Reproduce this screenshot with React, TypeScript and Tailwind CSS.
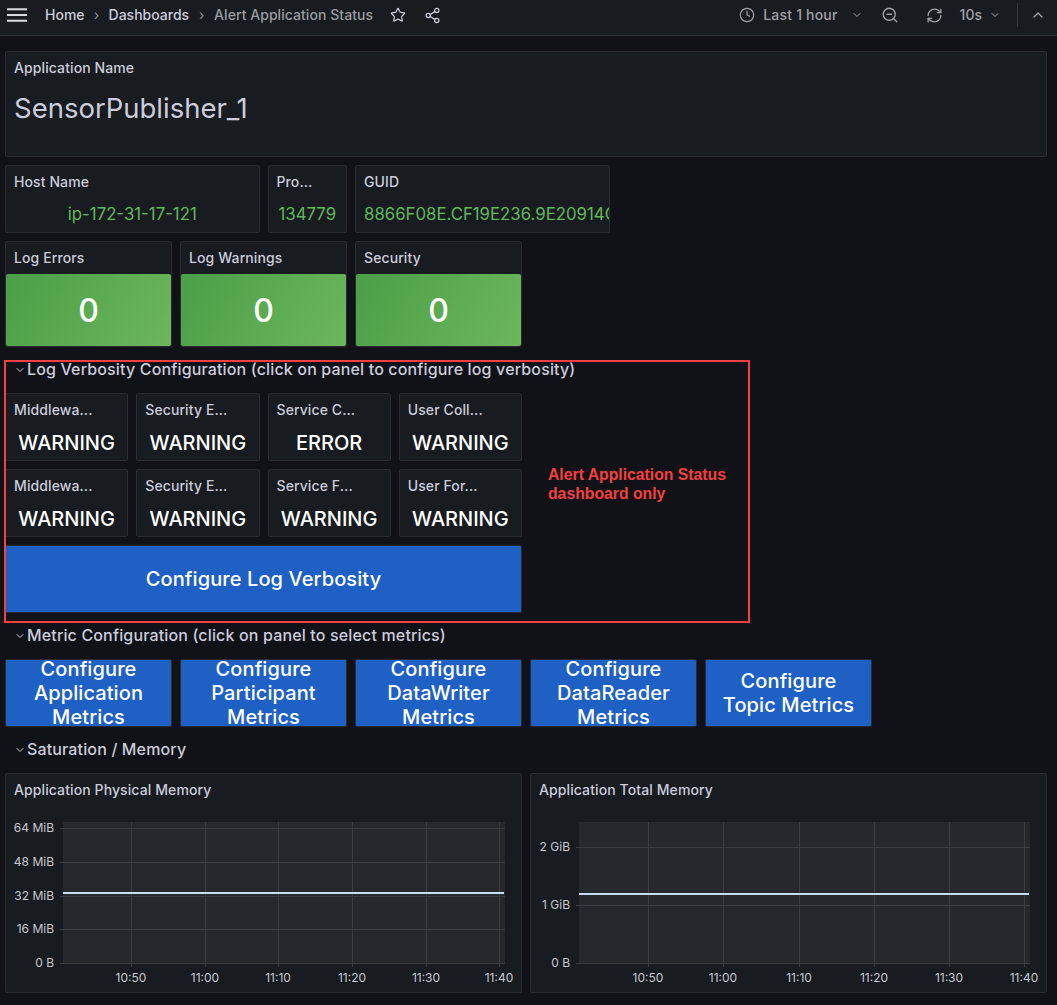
import React from "react";
import { ChevronDown, ChevronUp, Clock, RefreshCw, Share2, Star, ZoomOut } from "lucide-react";

const Panel: React.FC<{ className?: string; title?: string; children?: React.ReactNode }> = ({
  className = "",
  title,
  children,
}) => (
  <div className={`flex flex-col min-w-0 overflow-hidden rounded-[2px] border border-[#2a2c32] bg-[#181b1f] ${className}`}>
    {title && (
      <div className="h-8 shrink-0 px-2 flex items-center text-sm font-medium tracking-[0.1px] text-[#ccccdc] whitespace-nowrap">
        {title}
      </div>
    )}
    {children}
  </div>
);

const Row: React.FC<{ title: string }> = ({ title }) => (
  <div className="h-[30px] flex items-center pl-[9px] pb-[2px] text-base font-medium tracking-[0.15px] text-[#ccccdc] whitespace-nowrap">
    <ChevronDown size={12} strokeWidth={2} className="mr-[1px] mt-[2px]" />
    {title}
  </div>
);

const StatPanel: React.FC<{ title: string; value: string; className: string; center?: boolean }> = ({
  title,
  value,
  className,
  center = true,
}) => (
  <Panel title={title} className={className}>
    <div
      className={`flex-1 flex items-center pb-[1px] text-[16.8px] text-[#60b85a] whitespace-nowrap overflow-hidden ${
        center ? "justify-center" : "px-2"
      }`}
    >
      {value}
    </div>
  </Panel>
);

const GreenStat: React.FC<{ title: string }> = ({ title }) => (
  <Panel title={title} className="col-span-4 h-[106px]">
    <div className="flex-1 flex items-center justify-center pt-[2px] rounded-[2px] text-[32px] font-medium text-white bg-[linear-gradient(120deg,#4a9f47,#6db65c)]">
      0
    </div>
  </Panel>
);

const LevelPanel: React.FC<{ title: string; value: string }> = ({ title, value }) => (
  <Panel title={title} className="col-span-3 h-[68px]">
    <div className="flex-1 flex items-center justify-center pb-[1px] text-xl font-medium text-white">{value}</div>
  </Panel>
);

const ButtonPanel: React.FC<{ className: string; lines: string[] }> = ({ className, lines }) => (
  <div
    className={`h-[68px] flex flex-col items-center justify-center overflow-hidden rounded-[2px] border border-[#2a2c32] bg-[#1f60c4] text-xl leading-6 font-medium tracking-[0.1px] text-white ${className}`}
  >
    {lines.map((line) => (
      <div key={line}>{line}</div>
    ))}
  </div>
);

interface ChartProps {
  title: string;
  originX: number;
  plotLeft: number;
  plotRight: number;
  lineY: number;
  yTicks: { label: string; y: number }[];
  xTicks: { label: string; x: number }[];
}

const ORIGIN_Y = 806;

const Chart: React.FC<ChartProps> = ({ title, originX, plotLeft, plotRight, lineY, yTicks, xTicks }) => {
  const left = plotLeft - originX;
  const right = plotRight - originX;
  return (
    <Panel title={title} className="col-span-12 h-[220px]">
      <svg width="515" height="186" className="block" style={{ fontFamily: "Inter, sans-serif" }}>
        <rect x={left} y={822 - ORIGIN_Y} width={right - left} height={142} fill="#26292b" />
        {yTicks.map((t) => (
          <g key={t.label}>
            <line
              x1={left - 3}
              x2={right}
              y1={t.y - ORIGIN_Y + 0.5}
              y2={t.y - ORIGIN_Y + 0.5}
              stroke="#3b3e41"
            />
            <text x={left - 9} y={t.y - ORIGIN_Y + 4} textAnchor="end" fontSize="12" fill="#c7c8d0">
              {t.label}
            </text>
          </g>
        ))}
        {xTicks.map((t) => (
          <g key={t.label}>
            <line
              x1={t.x - originX + 0.5}
              x2={t.x - originX + 0.5}
              y1={822 - ORIGIN_Y}
              y2={967 - ORIGIN_Y}
              stroke="#3b3e41"
            />
            <text x={t.x - originX} y={982 - ORIGIN_Y} textAnchor="middle" fontSize="12" fill="#c7c8d0">
              {t.label}
            </text>
          </g>
        ))}
        <line
          x1={left}
          x2={right - 1}
          y1={lineY - ORIGIN_Y}
          y2={lineY - ORIGIN_Y}
          stroke="#c8dcff"
          strokeWidth="2"
        />
      </svg>
    </Panel>
  );
};

const GRID = "grid grid-cols-[repeat(24,minmax(0,1fr))] gap-2";

export default function App() {
  return (
    <div className="relative h-[1005px] overflow-hidden bg-[#111217] text-[#ccccdc] [font-family:Inter,sans-serif]">
      {/* Top bar */}
      <header className="h-9 flex items-center bg-[#181b1f] border-b border-[#2f3136] pl-[7px] pr-[11px] pb-[5px] text-sm font-medium">
        <svg width="20" height="14" viewBox="0 0 20 14" className="mr-[18px] text-[#d8d9de]">
          <path d="M0 1.2h20M0 7h20M0 12.8h20" stroke="currentColor" strokeWidth="2" fill="none" />
        </svg>
        <span>Home</span>
        <span className="w-[24px] text-center text-[#8e9096] font-normal">›</span>
        <span>Dashboards</span>
        <span className="w-[25px] text-center text-[#8e9096] font-normal">›</span>
        <span className="text-[#9a9ca2] tracking-[0.05px]">Alert Application Status</span>
        <Star size={16} strokeWidth={1.8} className="ml-[17px]" />
        <Share2 size={17} strokeWidth={1.8} className="ml-[18px]" />
        <div className="ml-auto flex items-center text-[#a0a2a8]">
          <Clock size={16} strokeWidth={1.8} />
          <span className="ml-[8px] tracking-[0.2px]">Last 1 hour</span>
          <ChevronDown size={12} strokeWidth={2} className="ml-[13px]" />
          <ZoomOut size={18} strokeWidth={1.8} className="ml-[18px]" />
          <RefreshCw size={17} strokeWidth={1.8} className="ml-[27px]" />
          <span className="ml-[17px]">10s</span>
          <ChevronDown size={12} strokeWidth={2} className="ml-[7px]" />
          <div className="ml-[16px] h-6 w-px bg-[#33353a]" />
          <ChevronUp size={16} strokeWidth={2} className="ml-[12px]" />
        </div>
      </header>

      <main className="pl-[5px] pr-[10px] pt-[15px] flex flex-col gap-2 text-sm">
        <Panel title="Application Name" className="h-[106px]">
          <div className="px-2 pt-[6px] text-[27.5px] leading-9 text-[#ccccdc]">SensorPublisher_1</div>
        </Panel>

        <div className={GRID}>
          <StatPanel title="Host Name" value="ip-172-31-17-121" className="col-span-6 h-[68px]" />
          <StatPanel title="Pro..." value="134779" className="col-span-2 h-[68px]" />
          <StatPanel
            title="GUID"
            value="8866F08E.CF19E236.9E20914C"
            className="col-span-6 h-[68px]"
            center={false}
          />
        </div>

        <div className={GRID}>
          <GreenStat title="Log Errors" />
          <GreenStat title="Log Warnings" />
          <GreenStat title="Security" />
        </div>

        <Row title="Log Verbosity Configuration (click on panel to configure log verbosity)" />
        <div className={GRID}>
          <LevelPanel title="Middlewa..." value="WARNING" />
          <LevelPanel title="Security E..." value="WARNING" />
          <LevelPanel title="Service C..." value="ERROR" />
          <LevelPanel title="User Coll..." value="WARNING" />
        </div>
        <div className={GRID}>
          <LevelPanel title="Middlewa..." value="WARNING" />
          <LevelPanel title="Security E..." value="WARNING" />
          <LevelPanel title="Service F..." value="WARNING" />
          <LevelPanel title="User For..." value="WARNING" />
        </div>
        <div className={GRID}>
          <ButtonPanel className="col-span-12" lines={["Configure Log Verbosity"]} />
        </div>

        <Row title="Metric Configuration (click on panel to select metrics)" />
        <div className={GRID}>
          <ButtonPanel className="col-span-4" lines={["Configure", "Application", "Metrics"]} />
          <ButtonPanel className="col-span-4" lines={["Configure", "Participant", "Metrics"]} />
          <ButtonPanel className="col-span-4" lines={["Configure", "DataWriter", "Metrics"]} />
          <ButtonPanel className="col-span-4" lines={["Configure", "DataReader", "Metrics"]} />
          <ButtonPanel className="col-span-4" lines={["Configure", "Topic Metrics"]} />
        </div>

        <Row title="Saturation / Memory" />
        <div className={GRID}>
          <Chart
            title="Application Physical Memory"
            originX={6}
            plotLeft={63}
            plotRight={505}
            lineY={893}
            yTicks={[
              { label: "64 MiB", y: 828 },
              { label: "48 MiB", y: 862 },
              { label: "32 MiB", y: 896 },
              { label: "16 MiB", y: 929 },
              { label: "0 B", y: 963 },
            ]}
            xTicks={[
              { label: "10:50", x: 131 },
              { label: "11:00", x: 205 },
              { label: "11:10", x: 278 },
              { label: "11:20", x: 352 },
              { label: "11:30", x: 426 },
              { label: "11:40", x: 499 },
            ]}
          />
          <Chart
            title="Application Total Memory"
            originX={531}
            plotLeft={579}
            plotRight={1030}
            lineY={894}
            yTicks={[
              { label: "2 GiB", y: 847 },
              { label: "1 GiB", y: 905 },
              { label: "0 B", y: 963 },
            ]}
            xTicks={[
              { label: "10:50", x: 648 },
              { label: "11:00", x: 723 },
              { label: "11:10", x: 799 },
              { label: "11:20", x: 874 },
              { label: "11:30", x: 949 },
              { label: "11:40", x: 1024 },
            ]}
          />
        </div>
      </main>

      {/* Screenshot annotation laid over the dashboard */}
      <div className="absolute left-1 top-[360px] h-[263px] w-[746px] border-2 border-[#f44040] pointer-events-none" />
      <div className="absolute left-[548px] top-[465px] text-[15.75px] leading-[19px] font-bold text-[#f44040] [font-family:'Liberation_Sans',Arial,sans-serif]">
        Alert Application Status
        <br />
        dashboard only
      </div>
    </div>
  );
}
